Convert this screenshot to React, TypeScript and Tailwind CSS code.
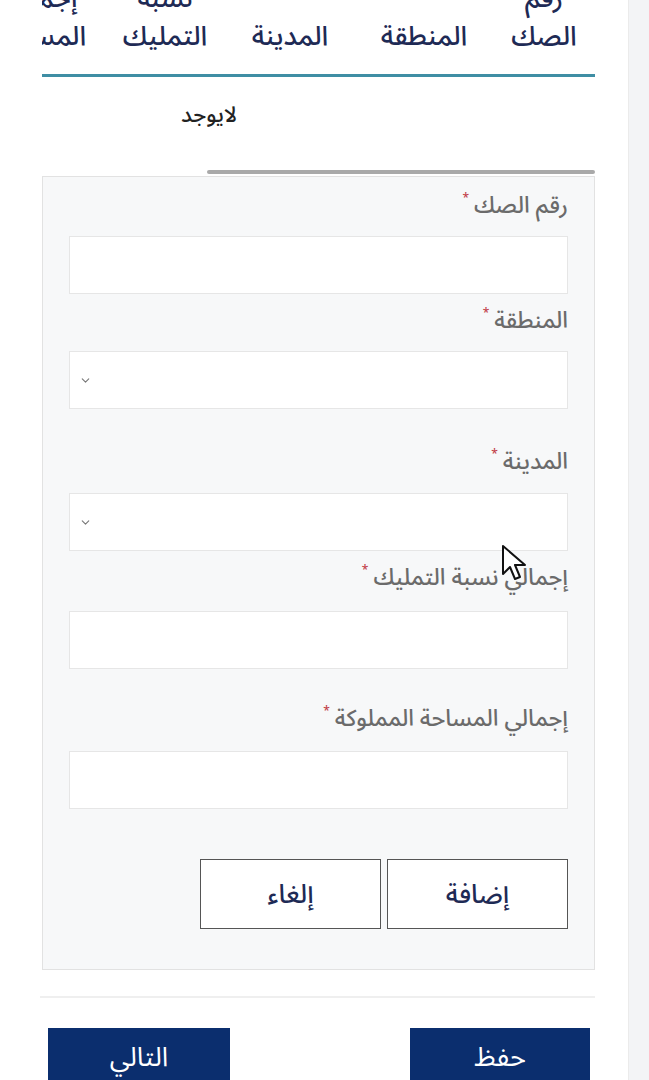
import { ChevronDown } from "lucide-react";

const font = "font-['Noto_Sans_Arabic','DejaVu_Sans',sans-serif]";

const headers = [
  { lines: ["رقم", "الصك"], w: "w-[102px]" },
  { lines: ["المنطقة"], w: "w-[138px]" },
  { lines: ["المدينة"], w: "w-[130px]" },
  { lines: ["نسبة", "التمليك"], w: "w-[120px]" },
  { lines: ["إجمالي", "المساحة"], w: "w-[130px]" },
];

const Label = ({ text, className }: { text: string; className: string }) => (
  <label className={`flex items-start text-[23px] font-medium leading-[28px] text-[#6b6b6b] ${className}`}>
    {text}
    <span className="mr-[5px] text-[12px] leading-[14px] text-[#c2414b]">*</span>
  </label>
);

const Field = ({ select }: { select?: boolean }) => (
  <div className="relative h-[58px] w-full border border-[#e6e6e6] bg-white">
    {select && (
      <ChevronDown className="absolute left-[9px] top-[22px] h-[13px] w-[13px] text-[#777]" strokeWidth={2} />
    )}
  </div>
);

export default function App() {
  return (
    <div className={`${font} flex h-[1080px] w-[649px] overflow-hidden bg-white`}>
      <main dir="rtl" className="relative w-[629px] shrink-0 border-r border-[#ebebeb] bg-white pr-[33px] pl-[42px]">
        {/* table header, scrolled so first line is cut */}
        <div className="overflow-hidden">
          <div className="-mt-[20px] flex items-end text-[27px] font-medium leading-[38px] text-[#1e2a55]">
            {headers.map((h) => (
              <div key={h.lines.join(" ")} className={`${h.w} shrink-0 text-center whitespace-nowrap`}>
                {h.lines.map((l) => (
                  <div key={l}>{l}</div>
                ))}
              </div>
            ))}
          </div>
        </div>
        <div className="mt-[18px] h-[3px] bg-[#3f8ea4]" />
        <div className="mt-[23px] pr-[358px] text-[22px] font-medium leading-[30px] text-[#222]">لايوجد</div>
        <div className="mt-[40px] h-[4px] w-[388px] rounded-sm bg-[#a9a9a9]" />

        {/* form */}
        <section className="mt-[2px] flex flex-col items-stretch border border-[#e2e2e2] bg-[#f7f8f9] pr-[26px] pl-[26px] pb-[40px]">
          <Label text="رقم الصك" className="mt-[15px]" />
          <div className="mt-[16px]"><Field /></div>
          <Label text="المنطقة" className="mt-[13px]" />
          <div className="mt-[16px]"><Field select /></div>
          <Label text="المدينة" className="mt-[39px]" />
          <div className="mt-[17px]"><Field select /></div>
          <Label text="إجمالي نسبة التمليك" className="mt-[13px]" />
          <div className="mt-[19px]"><Field /></div>
          <Label text="إجمالي المساحة المملوكة" className="mt-[36px]" />
          <div className="mt-[18px]"><Field /></div>
          <div className="mt-[50px] flex gap-[6px]">
            <button className="h-[70px] w-[181px] border-[1.5px] border-[#555] bg-white text-[26px] font-medium text-[#1e2a55]">
              إضافة
            </button>
            <button className="h-[70px] w-[181px] border-[1.5px] border-[#555] bg-white text-[26px] font-medium text-[#1e2a55]">
              إلغاء
            </button>
          </div>
        </section>

        <div className="mt-[26px] -ml-[2px] h-[2px] bg-[#efefef]" />
        <div className="mt-[30px] flex justify-between pr-[5px] pl-[6px]">
          <button className="h-[60px] w-[180px] bg-[#0b2e6e] text-[27px] text-white">حفظ</button>
          <button className="h-[60px] w-[182px] bg-[#0b2e6e] text-[27px] text-white">التالي</button>
        </div>

        {/* mouse pointer */}
        <svg className="absolute left-[501px] top-[544px]" width="26" height="38" viewBox="0 0 26 38">
          <path d="M2 2 L2 30 L9 23 L14 35 L19 33 L14 21 L24 21 Z" fill="#fff" stroke="#111" strokeWidth="2" strokeLinejoin="round" />
        </svg>
      </main>
      <aside className="flex-1 bg-[#f3f4f6]" />
    </div>
  );
}
